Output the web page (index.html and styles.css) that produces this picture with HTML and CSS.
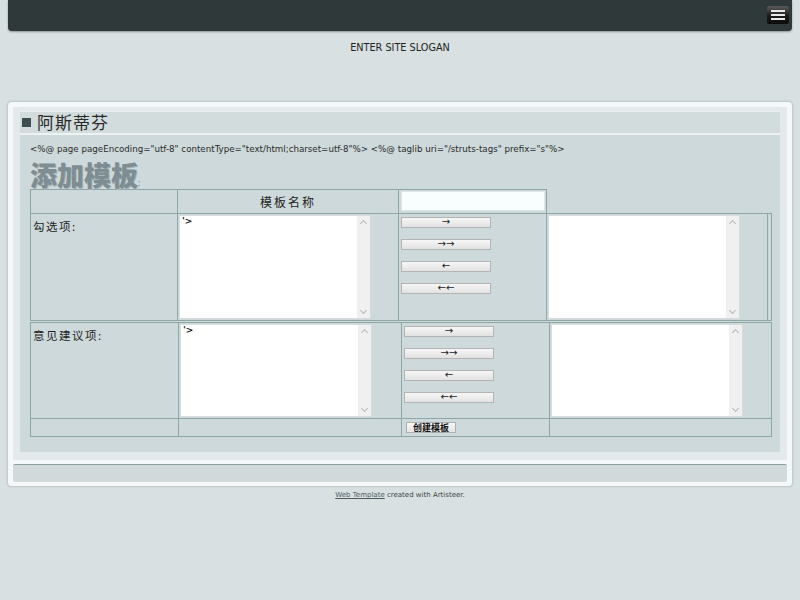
FILE: index.html
```html
<!DOCTYPE html>
<html>
<head>
<meta charset="utf-8">
<link rel="stylesheet" href="styles.css">
</head>
<body>
<div class="header">
  <div class="menu-btn"><span></span><span></span><span></span></div>
</div>
<div class="slogan">ENTER SITE SLOGAN</div>
<div class="sheet">
  <div class="layout">
    <div class="post">
      <div class="post-title"><span class="bullet"></span><span class="title-text">阿斯蒂芬</span></div>
      <div class="post-content">
        <div class="jsp">&lt;%@ page pageEncoding="utf-8" contentType="text/html;charset=utf-8"%&gt; &lt;%@ taglib uri="/struts-tags" prefix="s"%&gt;</div>
        <div class="heading">添加模板<span class="colon">:</span></div>
        <table class="grid grid1">
          <colgroup><col class="c1"><col class="c2"><col class="c3"><col class="c4"><col class="c5"></colgroup>
          <tr class="r1">
            <td></td>
            <td class="name-label">模板名称</td>
            <td class="input-cell"><div class="text-input"></div></td>
          </tr>
          <tr class="r2">
            <td class="label">勾选项:</td>
            <td class="list-cell"><div class="listbox tall"><span class="val">'&gt;</span><div class="sb"><span class="up"></span><span class="down"></span></div></div></td>
            <td class="btn-cell">
              <div class="btn">→</div>
              <div class="btn">→→</div>
              <div class="btn">←</div>
              <div class="btn">←←</div>
            </td>
            <td class="list-cell"><div class="listbox tall"><div class="sb"><span class="up"></span><span class="down"></span></div></div></td>
            <td></td>
          </tr>
        </table>
        <table class="grid grid2">
          <colgroup><col class="d1"><col class="d2"><col class="d3"><col class="d4"></colgroup>
          <tr class="r3">
            <td class="label">意见建议项:</td>
            <td class="list-cell"><div class="listbox short"><span class="val">'&gt;</span><div class="sb"><span class="up"></span><span class="down"></span></div></div></td>
            <td class="btn-cell">
              <div class="btn">→</div>
              <div class="btn">→→</div>
              <div class="btn">←</div>
              <div class="btn">←←</div>
            </td>
            <td class="list-cell"><div class="listbox short"><div class="sb"><span class="up"></span><span class="down"></span></div></div></td>
          </tr>
          <tr class="r4">
            <td></td>
            <td></td>
            <td class="submit-cell"><div class="submit">创建模板</div></td>
            <td></td>
          </tr>
        </table>
      </div>
    </div>
  </div>
  <div class="footer-bar"></div>
</div>
<div class="credit"><span class="link">Web Template</span> created with Artisteer.</div>
</body>
</html>
```

FILE: styles.css
```css
html, body {
  margin: 0;
  padding: 0;
}
body {
  background: #d8e0e1;
  font-family: "DejaVu Sans", Verdana, sans-serif;
  color: #333;
}
.header {
  margin: 0 8px;
  height: 31px;
  box-sizing: border-box;
  background: #2f3939;
  border-radius: 0 0 4px 4px;
  box-shadow: 0 1px 2px rgba(0,0,0,0.35);
  display: flex;
  justify-content: flex-end;
  align-items: flex-start;
  padding: 6px 3px 0 0;
}
.menu-btn {
  width: 22px;
  height: 18px;
  box-sizing: border-box;
  border-radius: 2px;
  background: linear-gradient(#5c5c5c, #1a1a1a 55%, #0c0c0c);
  display: flex;
  flex-direction: column;
  justify-content: center;
  align-items: center;
  gap: 2px;
}
.menu-btn span {
  display: block;
  width: 14px;
  height: 2px;
  background: #e8e8e8;
}
.slogan {
  margin-top: 11px;
  text-align: center;
  font-size: 9.7px;
  line-height: 12px;
  color: #222;
}
.sheet {
  margin: 47px 7px 0;
  box-sizing: border-box;
  border: 1px solid #c3cccc;
  border-radius: 4px;
  background: #f4f8f8;
  padding: 5px 5px 4px;
  box-shadow: 0 0 2px rgba(0,0,0,0.12);
}
.layout {
  background: #e4eaeb;
  padding: 4px 7px 8px;
}
.post-title {
  height: 24px;
  box-sizing: border-box;
  background: #d3dcdd;
  border-top: 1px solid #e9eeee;
  border-bottom: 2px solid #eef2f2;
  display: flex;
  align-items: center;
  padding-left: 2px;
  padding-bottom: 2px;
  gap: 6px;
}
.bullet {
  width: 9px;
  height: 9px;
  background: #3e4d50;
  margin-top: 2px;
}
.title-text {
  font-family: "Noto Sans CJK SC", sans-serif;
  font-size: 17px;
  line-height: 20px;
  letter-spacing: 1px;
  color: #2a2a2a;
}
.post-content {
  background: #ced9db;
  padding: 9px 9px 15px 10px;
}
.jsp {
  font-size: 8.7px;
  line-height: 10px;
  color: #2a2a2a;
}
.heading {
  margin-top: 10px;
  font-family: "Noto Sans CJK SC", sans-serif;
  font-weight: 900;
  font-size: 27px;
  line-height: 21px;
  height: 25px;
  color: #7d8d91;
  text-shadow: 1px 1px 0 #a7b3b6;
}
.colon {
  font-size: 9px;
  line-height: 0;
  font-weight: normal;
  text-shadow: none;
}
.grid {
  border-collapse: collapse;
  table-layout: fixed;
  width: 741px;
  font-family: "Noto Sans CJK SC", sans-serif;
}
.grid td {
  border: 1px solid #8ea7a4;
  padding: 0;
  vertical-align: top;
}
.c1 { width: 147px; }
.c2 { width: 221px; }
.c3 { width: 148px; }
.c4 { width: 221px; }
.c5 { width: 4px; }
.d1 { width: 148px; }
.d2 { width: 223px; }
.d3 { width: 148px; }
.d4 { width: 222px; }
.r1 { height: 24px; }
.r2 { height: 107px; }
.grid2 { margin-top: 1px; }
.r3 { height: 96px; }
.r4 { height: 18px; }
.name-label {
  vertical-align: middle !important;
  text-align: center;
  font-size: 12px;
  letter-spacing: 2px;
  color: #1e1e1e;
}
.input-cell {
  padding: 1px 1px 1px 2px !important;
}
.text-input {
  height: 20px;
  box-sizing: border-box;
  background: #f8fdfd;
  border: 1px solid #dfe6e6;
  border-radius: 1px;
}
.label {
  padding: 5px 0 0 2px !important;
  font-size: 11.5px;
  line-height: 14px;
  color: #1e1e1e;
  letter-spacing: 1.5px;
}
.list-cell {
  padding: 1px !important;
}
.listbox {
  width: 192px;
  box-sizing: border-box;
  background: #fff;
  border: 1px solid #d6dcdc;
  position: relative;
}
.tall { height: 104px; }
.short { height: 93px; }
.val {
  display: block;
  padding: 1px 0 0 2px;
  font-family: "DejaVu Sans", sans-serif;
  font-size: 9px;
  line-height: 9px;
  font-weight: bold;
  color: #111;
}
.sb {
  position: absolute;
  top: 0;
  right: 0;
  bottom: 0;
  width: 13px;
  background: #f0f0f0;
}
.up, .down {
  position: absolute;
  left: 4px;
  width: 4px;
  height: 4px;
  border-left: 1px solid #b8b8b8;
  border-top: 1px solid #b8b8b8;
}
.up { top: 5px; transform: rotate(45deg); }
.down { bottom: 5px; transform: rotate(225deg); }
.btn-cell {
  padding: 3px 0 0 2px !important;
}
.btn {
  width: 90px;
  height: 11px;
  box-sizing: border-box;
  border: 1px solid #b4b4b4;
  background: linear-gradient(#f6f6f6, #e2e2e2);
  font-family: "DejaVu Sans", sans-serif;
  font-size: 10px;
  line-height: 8px;
  text-align: center;
  color: #222;
  margin-bottom: 11px;
  overflow: hidden;
}
.submit-cell {
  padding: 3px 0 0 4px !important;
}
.submit {
  width: 50px;
  height: 11px;
  box-sizing: border-box;
  border: 1px solid #b0b0b0;
  background: linear-gradient(#f8f8f8, #e4e4e4);
  font-size: 9px;
  line-height: 9px;
  font-weight: bold;
  text-align: center;
  color: #111;
}
.footer-bar {
  margin-top: 4px;
  height: 18px;
  box-sizing: border-box;
  background: #d1d9da;
  border-top: 1px solid #8fa19f;
  border-radius: 2px;
}
.credit {
  margin-top: 4px;
  text-align: center;
  font-size: 7px;
  line-height: 9px;
  color: #444;
}
.link {
  text-decoration: underline;
  color: #4e5c5e;
}
```
